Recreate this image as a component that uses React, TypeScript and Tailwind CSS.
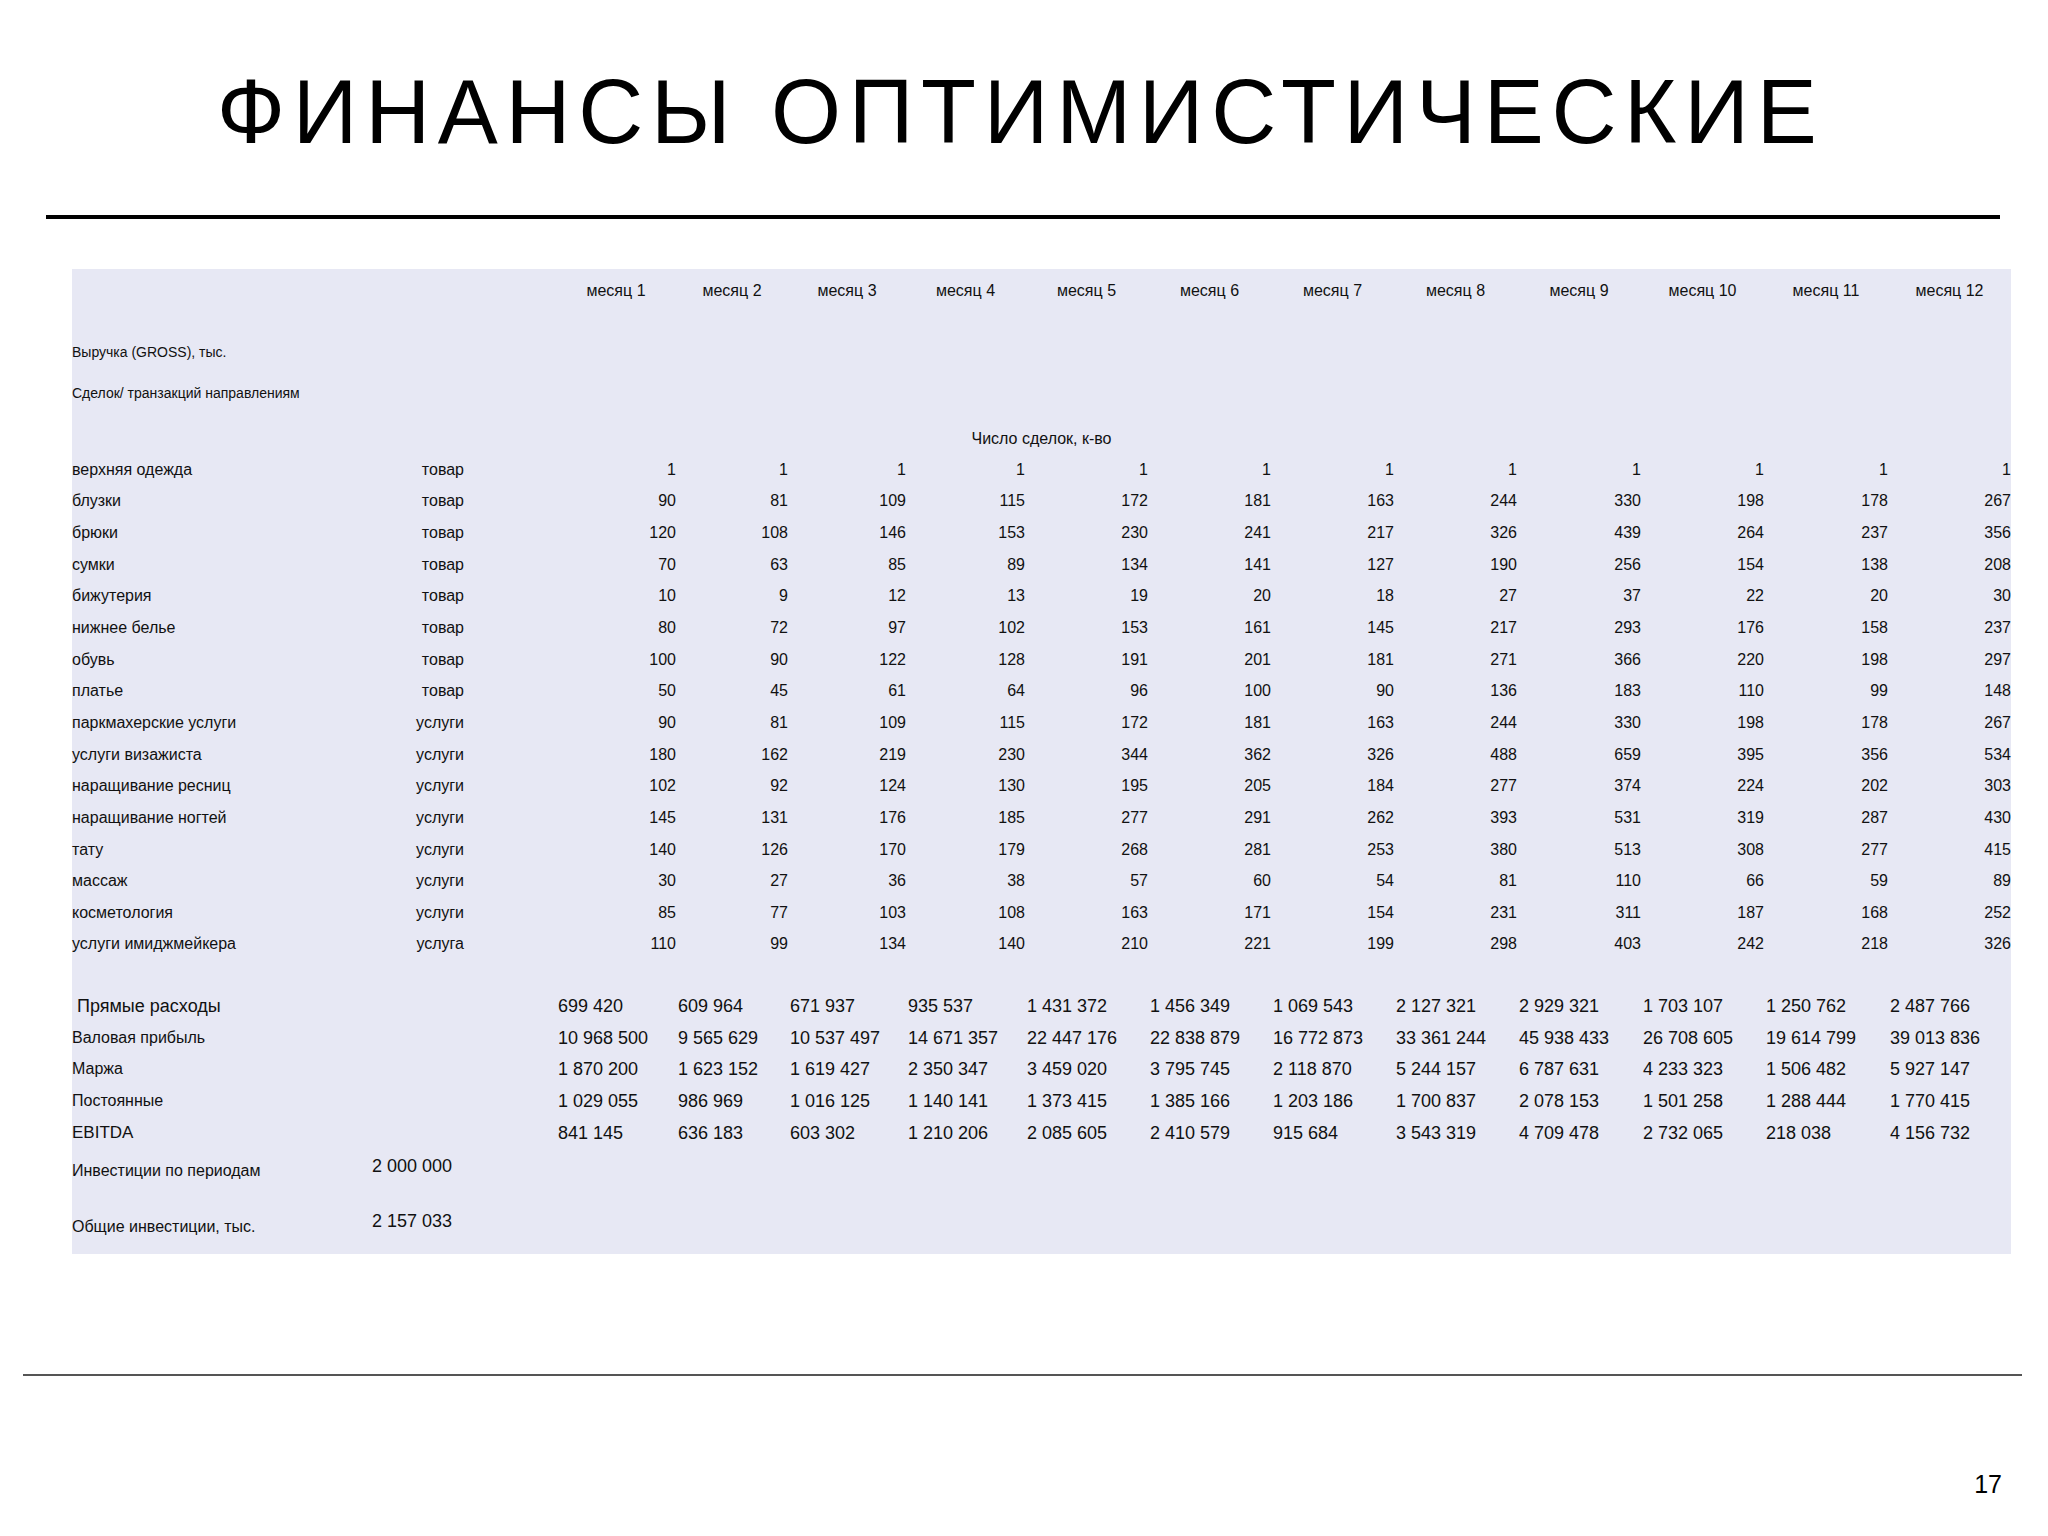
import React from "react";

const GRID =
  "grid grid-cols-[300px_92px_92px_120px_112px_118px_119px_123px_123px_123px_123px_124px_123px_124px_123px]";

const months = Array.from({ length: 12 }, (_, i) => `месяц ${i + 1}`);

const items: [string, string, number[]][] = [
  ["верхняя одежда", "товар", [1, 1, 1, 1, 1, 1, 1, 1, 1, 1, 1, 1]],
  ["блузки", "товар", [90, 81, 109, 115, 172, 181, 163, 244, 330, 198, 178, 267]],
  ["брюки", "товар", [120, 108, 146, 153, 230, 241, 217, 326, 439, 264, 237, 356]],
  ["сумки", "товар", [70, 63, 85, 89, 134, 141, 127, 190, 256, 154, 138, 208]],
  ["бижутерия", "товар", [10, 9, 12, 13, 19, 20, 18, 27, 37, 22, 20, 30]],
  ["нижнее белье", "товар", [80, 72, 97, 102, 153, 161, 145, 217, 293, 176, 158, 237]],
  ["обувь", "товар", [100, 90, 122, 128, 191, 201, 181, 271, 366, 220, 198, 297]],
  ["платье", "товар", [50, 45, 61, 64, 96, 100, 90, 136, 183, 110, 99, 148]],
  ["паркмахерские услуги", "услуги", [90, 81, 109, 115, 172, 181, 163, 244, 330, 198, 178, 267]],
  ["услуги визажиста", "услуги", [180, 162, 219, 230, 344, 362, 326, 488, 659, 395, 356, 534]],
  ["наращивание ресниц", "услуги", [102, 92, 124, 130, 195, 205, 184, 277, 374, 224, 202, 303]],
  ["наращивание ногтей", "услуги", [145, 131, 176, 185, 277, 291, 262, 393, 531, 319, 287, 430]],
  ["тату", "услуги", [140, 126, 170, 179, 268, 281, 253, 380, 513, 308, 277, 415]],
  ["массаж", "услуги", [30, 27, 36, 38, 57, 60, 54, 81, 110, 66, 59, 89]],
  ["косметология", "услуги", [85, 77, 103, 108, 163, 171, 154, 231, 311, 187, 168, 252]],
  ["услуги имиджмейкера", "услуга", [110, 99, 134, 140, 210, 221, 199, 298, 403, 242, 218, 326]],
];

const totals: [string, string, string[]][] = [
  [
    "Прямые расходы",
    "pl-[5px] text-[18px]",
    ["699 420", "609 964", "671 937", "935 537", "1 431 372", "1 456 349", "1 069 543", "2 127 321", "2 929 321", "1 703 107", "1 250 762", "2 487 766"],
  ],
  [
    "Валовая прибыль",
    "text-[16px]",
    ["10 968 500", "9 565 629", "10 537 497", "14 671 357", "22 447 176", "22 838 879", "16 772 873", "33 361 244", "45 938 433", "26 708 605", "19 614 799", "39 013 836"],
  ],
  [
    "Маржа",
    "text-[16px]",
    ["1 870 200", "1 623 152", "1 619 427", "2 350 347", "3 459 020", "3 795 745", "2 118 870", "5 244 157", "6 787 631", "4 233 323", "1 506 482", "5 927 147"],
  ],
  [
    "Постоянные",
    "text-[16px]",
    ["1 029 055", "986 969", "1 016 125", "1 140 141", "1 373 415", "1 385 166", "1 203 186", "1 700 837", "2 078 153", "1 501 258", "1 288 444", "1 770 415"],
  ],
  [
    "EBITDA",
    "text-[17px]",
    ["841 145", "636 183", "603 302", "1 210 206", "2 085 605", "2 410 579", "915 684", "3 543 319", "4 709 478", "2 732 065", "218 038", "4 156 732"],
  ],
];

export default function App() {
  return (
    <div className="w-[2048px] h-[1536px] bg-white text-[#111] font-['Liberation_Sans',Arial,sans-serif] overflow-hidden">
      {/* Title */}
      <div className="pt-[67px] pr-[7px] text-center text-[90px] leading-none tracking-[7.7px] text-black whitespace-nowrap">
        ФИНАНСЫ ОПТИМИСТИЧЕСКИЕ
      </div>
      <div className="mt-[58px] ml-[46px] w-[1954px] h-[4px] bg-black" />

      {/* Panel */}
      <div className="mt-[50px] ml-[72px] w-[1939px] h-[985px] bg-[#e7e8f4]">
        {/* Month header */}
        <div className={`${GRID} h-[44px] items-center text-[16px] leading-none`}>
          <div />
          <div />
          <div />
          {months.map((m) => (
            <div key={m} className="text-center whitespace-nowrap">
              {m}
            </div>
          ))}
        </div>

        <div className="mt-[23px] h-[32px] flex items-center text-[14px] leading-none">
          Выручка (GROSS), тыс.
        </div>
        <div className="mt-[9px] h-[32px] flex items-center text-[14px] leading-none">
          Сделок/ транзакций направлениям
        </div>
        <div className="mt-[14px] h-[31px] flex items-center justify-center text-[16px] leading-none">
          Число сделок, к-во
        </div>

        {items.map(([name, type, vals]) => (
          <div key={name} className={`${GRID} h-[31.65px] items-center text-[16px] leading-none`}>
            <div className="whitespace-nowrap">{name}</div>
            <div className="text-right">{type}</div>
            <div />
            {vals.map((v, i) => (
              <div key={i} className="text-right">
                {v}
              </div>
            ))}
          </div>
        ))}

        <div className="mt-[30px]">
          {totals.map(([name, cls, vals]) => (
            <div key={name} className={`${GRID} h-[31.65px] items-center leading-none`}>
              <div className={`whitespace-nowrap ${cls}`}>{name}</div>
              <div />
              <div />
              {vals.map((v, i) => (
                <div key={i} className="pl-[2px] text-[18px] whitespace-nowrap">
                  {v}
                </div>
              ))}
            </div>
          ))}
        </div>

        <div className={`${GRID} h-[48px] leading-5`}>
          <div className="pt-[13px] text-[16px] whitespace-nowrap">Инвестиции по периодам</div>
          <div className="col-span-2 pt-[8px] text-[18px] whitespace-nowrap">2 000 000</div>
        </div>
        <div className={`${GRID} h-[57px] leading-5`}>
          <div className="pt-[21px] text-[16px] whitespace-nowrap">Общие инвестиции, тыс.</div>
          <div className="col-span-2 pt-[15px] text-[18px] whitespace-nowrap">2 157 033</div>
        </div>
      </div>

      {/* Footer */}
      <div className="mt-[120px] ml-[23px] w-[1999px] h-[2px] bg-[#555]" />
      <div className="mt-[96px] pr-[46px] text-right text-[25px] leading-none text-black">17</div>
    </div>
  );
}
